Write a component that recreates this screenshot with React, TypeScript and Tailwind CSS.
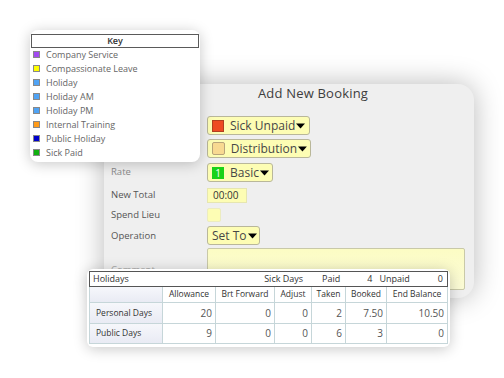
import React from "react";

const font = { fontFamily: '"Open Sans", "DejaVu Sans", sans-serif' };

function Tri() {
  return (
    <svg width="9" height="6" viewBox="0 0 9 6" className="ml-[1px]">
      <path d="M0 0.5 L9 0.5 L4.5 5.5 Z" fill="#000" />
    </svg>
  );
}

function Drop({ swatch, label, w }: { swatch: React.ReactNode; label: string; w: string }) {
  return (
    <div
      className={`flex items-center h-[19px] ${w} rounded-[3px] border border-[#b9b79a] bg-[#fdfdb4] pl-[4px] pr-[3px]`}
    >
      {swatch}
      <span className="ml-[6px] text-[12px] leading-none text-[#474747]">{label}</span>
      <Tri />
    </div>
  );
}

const keyItems: [string, string][] = [
  ["Company Service", "#a24bf0"],
  ["Compassionate Leave", "#ffff00"],
  ["Holiday", "#4fa3f5"],
  ["Holiday AM", "#4fa3f5"],
  ["Holiday PM", "#4fa3f5"],
  ["Internal Training", "#ff9b1a"],
  ["Public Holiday", "#0000cc"],
  ["Sick Paid", "#10b010"],
];

const cols = [
  { name: "", w: "w-[74px]" },
  { name: "Allowance", w: "w-[53px]" },
  { name: "Brt Forward", w: "w-[59px]" },
  { name: "Adjust", w: "w-[37px]" },
  { name: "Taken", w: "w-[34px]" },
  { name: "Booked", w: "w-[41px]" },
  { name: "End Balance", w: "w-[61px]" },
];

const rows = [
  { label: "Personal Days", vals: ["20", "0", "0", "2", "7.50", "10.50"], h: "h-[21px]" },
  { label: "Public Days", vals: ["9", "0", "0", "6", "3", "0"], h: "h-[20px]" },
];

export default function App() {
  return (
    <div className="relative w-[504px] h-[378px] overflow-hidden bg-white" style={font}>
      {/* Main booking panel */}
      <div className="ml-[104px] mt-[84px] w-[370px] h-[214px] rounded-r-[16px] rounded-tl-[6px] bg-[#efefef] shadow-[0_0_28px_rgba(0,0,0,0.28)]">
        <div className="pl-[48px] pt-[1px] text-center text-[13px] leading-[17px] text-[#3d3d3d] tracking-[0.2px]">
          Add New Booking
        </div>
        <div className="mt-[14px] flex flex-col">
          <div className="flex pl-[103px]">
            <Drop
              w="w-[103px]"
              label="Sick Unpaid"
              swatch={<div className="w-[12px] h-[12px] border border-[#b04020] bg-[#ee4b22]" />}
            />
          </div>
          <div className="mt-[4px] flex pl-[103px]">
            <Drop
              w="w-[104px]"
              label="Distribution"
              swatch={<div className="w-[13px] h-[13px] rounded-[2px] border border-[#b8a47a] bg-[#f8d991]" />}
            />
          </div>
          <div className="mt-[5px] flex items-center">
            <div className="w-[103px] pl-[7px] text-[9.5px] text-[#8a8a8a]">Rate</div>
            <Drop
              w="w-[66px]"
              label="Basic"
              swatch={
                <div className="w-[12px] h-[12px] bg-[#19d219] text-white text-[10px] leading-[12px] text-center">1</div>
              }
            />
          </div>
          <div className="mt-[6px] flex items-center">
            <div className="w-[103px] pl-[7px] text-[9.5px] text-[#555]">New Total</div>
            <div className="w-[40px] h-[15px] bg-[#fdfdb4] border border-[#e6e6b0] text-[10px] leading-[13px] pl-[5px] text-[#333]">
              00:00
            </div>
          </div>
          <div className="mt-[5px] flex items-center">
            <div className="w-[103px] pl-[7px] text-[9.5px] text-[#555]">Spend Lieu</div>
            <div className="w-[14px] h-[14px] rounded-[2px] bg-[#fdfdb4] border border-[#ececc0]" />
          </div>
          <div className="mt-[4px] flex items-center">
            <div className="w-[103px] pl-[7px] text-[9.5px] text-[#555]">Operation</div>
            <div className="flex items-center h-[19px] w-[53px] rounded-[3px] border border-[#b9b79a] bg-[#fdfdb4] pl-[4px] pr-[2px]">
              <span className="text-[12px] leading-none text-[#474747]">Set To</span>
              <Tri />
            </div>
          </div>
          <div className="mt-[3px] flex">
            <div className="w-[103px] pl-[7px] pt-[15px] text-[9.5px] text-[#aaa]">Comment</div>
            <div className="w-[258px] h-[42px] rounded-[2px] border border-[#c9c9a8] bg-gradient-to-b from-[#fcfcc4] to-[#fbfbd6]" />
          </div>
        </div>
      </div>

      {/* Key card */}
      <div className="absolute left-[30px] top-[30px] w-[170px] h-[132px] rounded-[8px] bg-white shadow-[0_2px_14px_rgba(0,0,0,0.22)] px-[1px] pt-[4px]">
        <div className="h-[14px] border border-[#5a5a5a] text-center text-[9px] leading-[12px] font-semibold text-[#333]">
          Key
        </div>
        <div className="flex flex-col -mt-[1px]">
          {keyItems.map(([name, c]) => (
            <div key={name} className="flex items-center h-[14px] pl-[2px]">
              <div className="w-[7px] h-[7px] border border-[#888]" style={{ backgroundColor: c }} />
              <span className="ml-[6px] text-[9px] leading-none text-[#666]">{name}</span>
            </div>
          ))}
        </div>
      </div>

      {/* Holidays card */}
      <div className="absolute left-[87px] top-[269px] w-[363px] h-[78px] rounded-[6px] bg-white shadow-[0_2px_14px_rgba(0,0,0,0.22)] p-[2px] text-[8.5px] text-[#333]">
        <div className="flex items-center h-[16px] border border-[#555] pl-[3px] pr-[4px] text-[9px]">
          <span>Holidays</span>
          <span className="ml-auto">Sick Days</span>
          <span className="ml-[19px]">Paid</span>
          <span className="ml-[27px]">4</span>
          <span className="ml-[7px]">Unpaid</span>
          <span className="ml-[28px]">0</span>
        </div>
        <div className="flex h-[16px] border-b border-[#c6d6d9]">
          {cols.map((c, i) => (
            <div
              key={i}
              className={`${c.w} flex items-center justify-center ${i === 0 ? "border-l" : ""} border-r border-[#c6d6d9] ${i === 0 ? "bg-gradient-to-b from-[#f6f7fb] to-[#e9ebf4]" : ""}`}
            >
              {c.name}
            </div>
          ))}
        </div>
        {rows.map((r) => (
          <div key={r.label} className={`flex ${r.h} border-b border-[#c6d6d9]`}>
            <div className="w-[74px] flex items-center pl-[6px] border-l border-r border-[#c6d6d9] bg-gradient-to-b from-[#f6f7fb] to-[#e9ebf4]">
              {r.label}
            </div>
            {r.vals.map((v, i) => (
              <div
                key={i}
                className={`${cols[i + 1].w} flex items-center justify-end pr-[3px] border-r border-[#c6d6d9] text-[10px] text-[#555]`}
              >
                {v}
              </div>
            ))}
          </div>
        ))}
      </div>
    </div>
  );
}
